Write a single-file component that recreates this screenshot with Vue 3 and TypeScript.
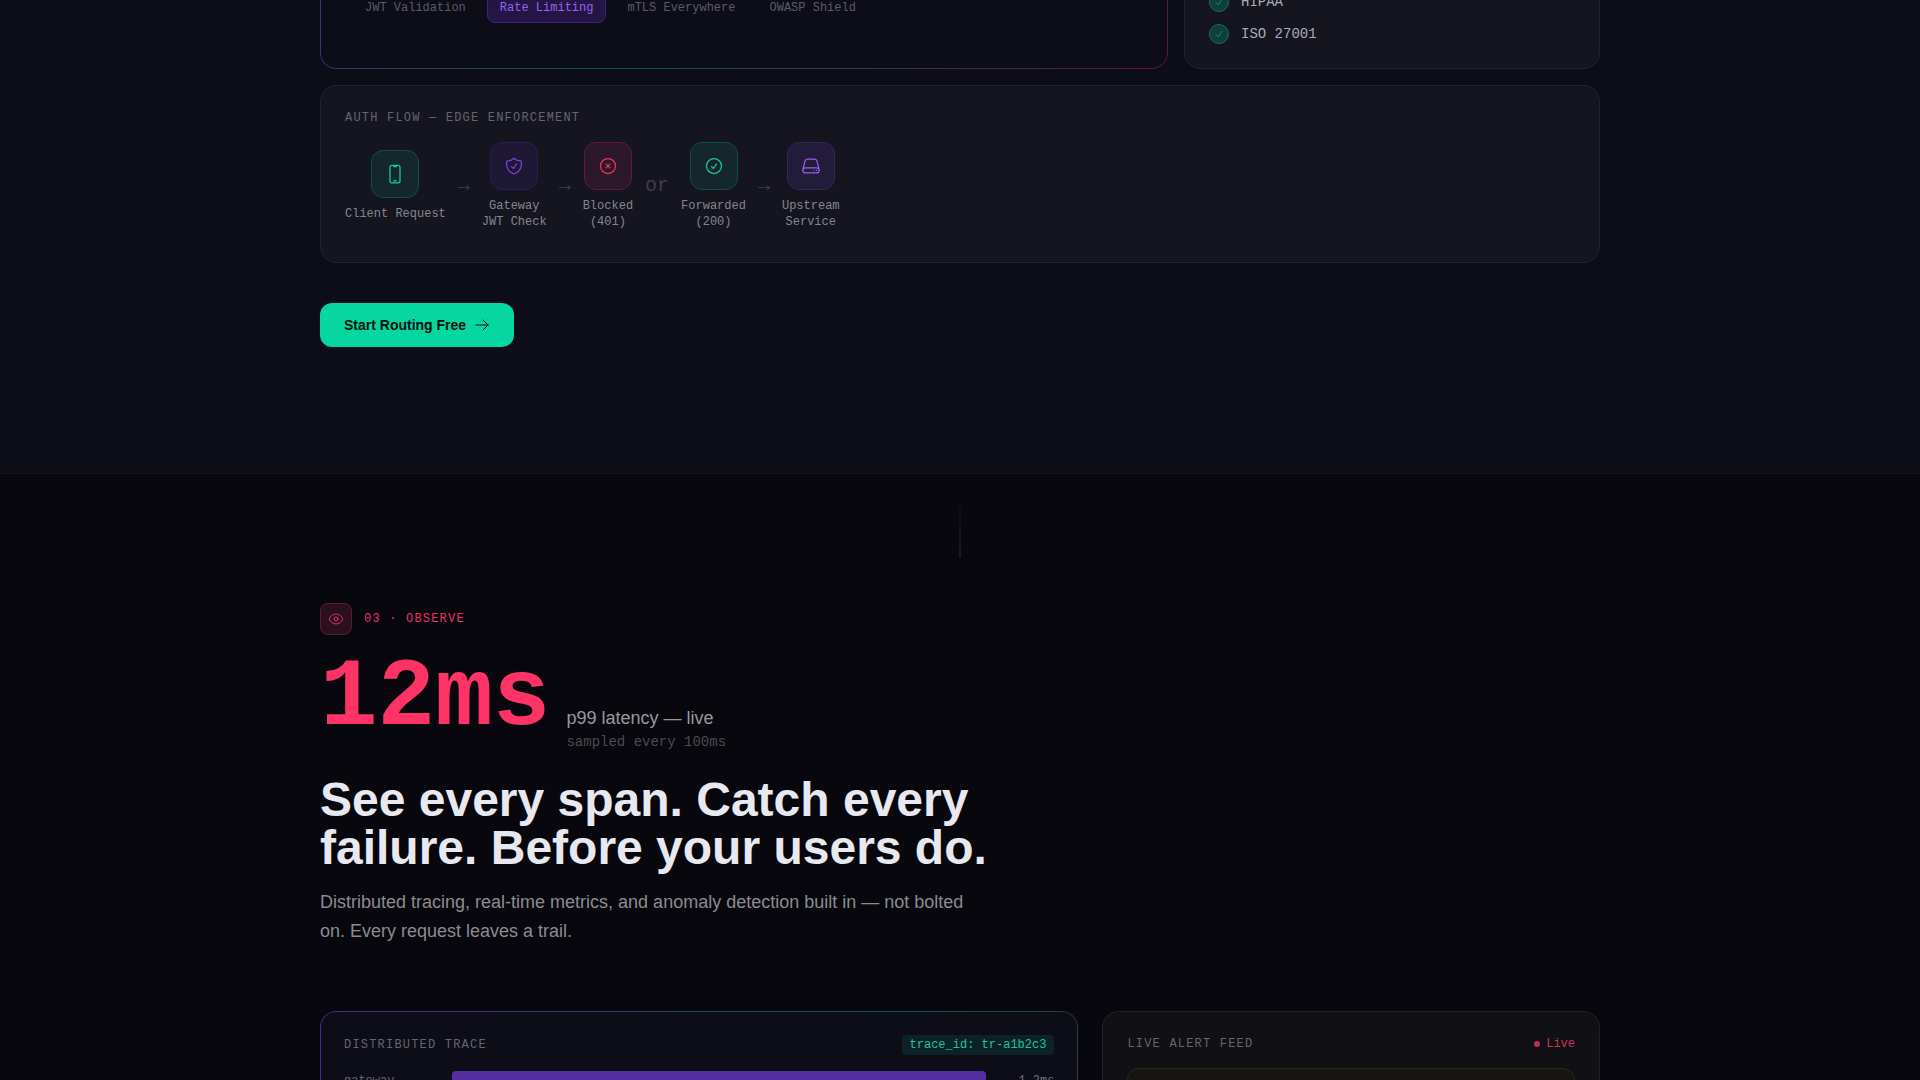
<script setup lang="ts">
import { ref } from 'vue'

type Tone = 'mint' | 'violet' | 'lilac' | 'rose'

interface FlowNode {
  kind: 'node'
  lines: string[]
  tone: Tone
  paths: string[]
}

interface FlowLink {
  kind: 'link'
  text: string
}

const tabs = ['JWT Validation', 'Rate Limiting', 'mTLS Everywhere', 'OWASP Shield']
const activeTab = ref('Rate Limiting')

const standards = ['HIPAA', 'ISO 27001']

const flow: (FlowNode | FlowLink)[] = [
  {
    kind: 'node',
    lines: ['Client Request'],
    tone: 'mint',
    paths: [
      'M10.5 1.5H8.25A2.25 2.25 0 0 0 6 3.75v16.5a2.25 2.25 0 0 0 2.25 2.25h7.5A2.25 2.25 0 0 0 18 20.25V3.75a2.25 2.25 0 0 0-2.25-2.25H13.5m-3 0V3h3V1.5m-3 0h3m-3 18.75h3',
    ],
  },
  { kind: 'link', text: '→' },
  {
    kind: 'node',
    lines: ['Gateway', 'JWT Check'],
    tone: 'violet',
    paths: [
      'M9 12.75 11.25 15 15 9.75m-3-7.036A11.959 11.959 0 0 1 3.598 6 11.99 11.99 0 0 0 3 9.749c0 5.592 3.824 10.29 9 11.623 5.176-1.332 9-6.03 9-11.622 0-1.31-.21-2.571-.598-3.751h-.152c-3.196 0-6.1-1.248-8.25-3.285Z',
    ],
  },
  { kind: 'link', text: '→' },
  {
    kind: 'node',
    lines: ['Blocked', '(401)'],
    tone: 'rose',
    paths: ['m9.75 9.75 4.5 4.5m0-4.5-4.5 4.5M21 12a9 9 0 1 1-18 0 9 9 0 0 1 18 0Z'],
  },
  { kind: 'link', text: 'or' },
  {
    kind: 'node',
    lines: ['Forwarded', '(200)'],
    tone: 'mint',
    paths: ['M9 12.75 11.25 15 15 9.75M21 12a9 9 0 1 1-18 0 9 9 0 0 1 18 0Z'],
  },
  { kind: 'link', text: '→' },
  {
    kind: 'node',
    lines: ['Upstream', 'Service'],
    tone: 'lilac',
    paths: [
      'M21.75 17.25v-.228a4.5 4.5 0 0 0-.12-1.03l-2.268-9.64a3.375 3.375 0 0 0-3.285-2.602H7.923a3.375 3.375 0 0 0-3.285 2.602l-2.268 9.64a4.5 4.5 0 0 0-.12 1.03v.228m19.5 0a3 3 0 0 1-3 3H5.25a3 3 0 0 1-3-3m19.5 0a3 3 0 0 0-3-3H5.25a3 3 0 0 0-3 3m16.5 0h.008v.008h-.008v-.008Zm-3 0h.008v.008h-.008v-.008Z',
    ],
  },
]
</script>

<template>
  <main class="page">
    <section class="secure">
      <div class="wrap">
        <div class="secure-grid">
          <div class="glow-card threats">
            <div class="tabs">
              <button
                v-for="tab in tabs"
                :key="tab"
                type="button"
                class="tab"
                :class="{ active: tab === activeTab }"
                @click="activeTab = tab"
              >{{ tab }}</button>
            </div>
          </div>

          <div class="card standards">
            <ul>
              <li v-for="name in standards" :key="name">
                <span class="tick">
                  <svg viewBox="0 0 24 24" width="10" height="10"><path d="m4.5 12.75 6 6 9-13.5" /></svg>
                </span>
                {{ name }}
              </li>
            </ul>
          </div>

          <div class="card flow-card">
            <h3 class="eyebrow">AUTH FLOW — EDGE ENFORCEMENT</h3>
            <div class="flow">
              <template v-for="(step, i) in flow" :key="i">
                <div v-if="step.kind === 'node'" class="node">
                  <span class="node-icon" :class="step.tone">
                    <svg viewBox="0 0 24 24" width="20" height="20">
                      <path v-for="d in step.paths" :key="d" :d="d" />
                    </svg>
                  </span>
                  <span class="node-label">
                    <span v-for="line in step.lines" :key="line">{{ line }}</span>
                  </span>
                </div>
                <span v-else class="link">{{ step.text }}</span>
              </template>
            </div>
          </div>
        </div>

        <button type="button" class="cta">
          Start Routing Free
          <svg viewBox="0 0 24 24" width="16" height="16"><path d="M13.5 4.5 21 12m0 0-7.5 7.5M21 12H3" /></svg>
        </button>
      </div>
    </section>

    <section class="observe">
      <div class="connector"></div>
      <div class="wrap">
        <div class="chapter">
          <span class="chapter-icon">
            <svg viewBox="0 0 24 24" width="16" height="16">
              <path d="M2.036 12.322a1.012 1.012 0 0 1 0-.639C3.423 7.51 7.36 4.5 12 4.5c4.638 0 8.573 3.007 9.963 7.178.07.207.07.431 0 .639C20.577 16.49 16.64 19.5 12 19.5c-4.638 0-8.573-3.007-9.963-7.178Z" />
              <path d="M15 12a3 3 0 1 1-6 0 3 3 0 0 1 6 0Z" />
            </svg>
          </span>
          <span class="chapter-name">03 · OBSERVE</span>
        </div>

        <div class="metric">
          <span class="metric-value">12ms</span>
          <div class="metric-note">
            <p class="metric-label">p99 latency — live</p>
            <p class="metric-sub">sampled every 100ms</p>
          </div>
        </div>

        <h2>See every span. Catch every failure. Before your users do.</h2>
        <p class="lead">
          Distributed tracing, real-time metrics, and anomaly detection built in — not bolted on. Every request
          leaves a trail.
        </p>

        <div class="observe-grid">
          <div class="glow-card trace">
            <div class="panel-head">
              <h3 class="eyebrow">DISTRIBUTED TRACE</h3>
              <code class="trace-id">trace_id: tr-a1b2c3</code>
            </div>
            <div class="span-row">
              <span class="span-name">gateway</span>
              <span class="span-bar"></span>
              <span class="span-time">1.2ms</span>
            </div>
          </div>

          <div class="card feed">
            <div class="panel-head">
              <h3 class="eyebrow">LIVE ALERT FEED</h3>
              <span class="live"><i class="dot"></i>Live</span>
            </div>
            <div class="alert"></div>
          </div>
        </div>
      </div>
    </section>
  </main>
</template>

<style>
body {
  background: #07070d;
  overflow: hidden;
}
</style>

<style scoped>
.page {
  --mono: "Liberation Mono", monospace;
  height: 100vh;
  overflow: hidden;
  color: #e8e8f0;
  background: #07070d;
  font-family: "Liberation Sans", Arial, sans-serif;
}

.page * {
  box-sizing: border-box;
}

h2,
h3,
p,
ul {
  margin: 0;
  padding: 0;
}

svg {
  display: block;
  flex: none;
  fill: none;
  stroke: currentColor;
  stroke-width: 1.5;
  stroke-linecap: round;
  stroke-linejoin: round;
}

.wrap {
  max-width: 1280px;
  margin: 0 auto;
}

.secure {
  padding-bottom: 126px;
  border-bottom: 1px solid #14141e;
  background: #0d0d18;
}

.secure-grid {
  display: grid;
  grid-template-columns: repeat(3, 1fr);
  gap: 16px;
}

.card {
  border: 1px solid #23232e;
  border-radius: 16px;
  background: #15151f;
}

.glow-card {
  position: relative;
  border-radius: 16px;
  background: #0d0d17;
}

/* Gradient hairline drawn round the card's edge */
.glow-card::before {
  content: "";
  position: absolute;
  inset: 0;
  padding: 1px;
  border-radius: inherit;
  background: linear-gradient(135deg, rgba(124, 58, 237, 0.6), rgba(6, 214, 160, 0.35) 50%, rgba(255, 51, 102, 0.35));
  mask: linear-gradient(#000 0 0) content-box exclude, linear-gradient(#000 0 0);
  pointer-events: none;
}

.threats {
  grid-column: span 2;
  margin-top: -160px;
  padding: 153px 32px 46px;
}

.tabs {
  display: flex;
  gap: 8px;
}

.tab {
  padding: 6px 12px;
  border: 1px solid transparent;
  border-radius: 8px;
  background: none;
  color: #5b5b66;
  font: 12px/16px var(--mono);
}

.tab.active {
  border-color: #40237f;
  background: #231645;
  color: #9a60ee;
}

.standards {
  display: flex;
  flex-direction: column;
  justify-content: flex-end;
  margin-top: -160px;
  padding: 24px;
}

.standards ul {
  display: flex;
  flex-direction: column;
  gap: 12px;
  list-style: none;
}

.standards li {
  display: flex;
  align-items: center;
  gap: 12px;
  color: #aaaab2;
  font: 14px/20px var(--mono);
}

.tick {
  display: grid;
  place-items: center;
  width: 20px;
  height: 20px;
  border: 1px solid #11705d;
  border-radius: 50%;
  background: #113d3a;
  color: #0bbd90;
}

.flow-card {
  grid-column: 1 / -1;
  padding: 24px 24px 32px;
}

.eyebrow {
  color: #65656f;
  font: 12px/16px var(--mono);
  letter-spacing: 1.2px;
}

.flow {
  display: flex;
  align-items: center;
  gap: 12px;
  margin-top: 16px;
}

.node {
  display: flex;
  flex-direction: column;
  align-items: center;
  gap: 8px;
}

.node-icon {
  display: grid;
  place-items: center;
  width: 48px;
  height: 48px;
  border: 1px solid;
  border-radius: 12px;
}

.mint {
  border-color: #134b45;
  background: #14282c;
}

.mint svg {
  color: #1fc79b;
}

.violet {
  border-color: #2a1d50;
  background: #1f1834;
}

.violet svg {
  color: #7540dc;
}

.lilac {
  border-color: #33275a;
  background: #221b39;
}

.lilac svg {
  color: #9560e8;
}

.rose {
  border-color: #5c1c39;
  background: #2d1829;
}

.rose svg {
  color: #ef3263;
}

.node-label {
  display: flex;
  flex-direction: column;
  align-items: center;
  color: #85858e;
  font: 12px/16px var(--mono);
}

.link {
  color: #3e3e48;
  font: 20px/28px var(--mono);
}

.cta {
  display: flex;
  align-items: center;
  gap: 8px;
  height: 44px;
  margin-top: 40px;
  padding: 0 24px;
  border: 0;
  border-radius: 12px;
  background: #06d6a0;
  color: #07110f;
  font: bold 14px/20px "Liberation Sans", Arial, sans-serif;
}

.observe {
  padding-top: 20px;
}

.connector {
  width: 2px;
  height: 64px;
  margin: 0 auto;
  background: linear-gradient(to bottom, transparent, #1d1738);
}

.chapter {
  display: flex;
  align-items: center;
  gap: 12px;
  margin-top: 45px;
}

.chapter-icon {
  display: grid;
  place-items: center;
  width: 32px;
  height: 32px;
  border: 1px solid #5e1a33;
  border-radius: 8px;
  background: #2c0f1d;
  color: #dd305c;
}

.chapter-name {
  color: #ee3263;
  font: 12px/16px var(--mono);
  letter-spacing: 1.2px;
}

.metric {
  display: flex;
  align-items: baseline;
  gap: 16px;
  margin-top: 16px;
}

.metric-value {
  color: #ff3366;
  font: bold 96px/96px var(--mono);
}

.metric-label {
  color: #98989c;
  font-size: 18px;
  line-height: 28px;
}

.metric-sub {
  color: #4b4b50;
  font: 14px/20px var(--mono);
}

h2 {
  max-width: 768px;
  margin-top: 24px;
  font-size: 48px;
  line-height: 48px;
}

.lead {
  max-width: 672px;
  margin-top: 16px;
  color: #8b8b90;
  font-size: 18px;
  line-height: 29px;
}

.observe-grid {
  display: grid;
  grid-template-columns: repeat(5, 1fr);
  gap: 24px;
  margin-top: 65px;
}

.trace {
  grid-column: span 3;
  min-height: 400px;
  padding: 24px;
}

.feed {
  grid-column: span 2;
  padding: 24px;
  border-color: #202024;
  background: #101015;
}

.panel-head {
  display: flex;
  align-items: center;
  justify-content: space-between;
  margin-bottom: 16px;
}

.trace-id {
  padding: 2px 8px;
  border-radius: 4px;
  background: #0c2226;
  color: #1dc896;
  font: 12px/16px var(--mono);
}

.span-row {
  display: flex;
  align-items: center;
  gap: 12px;
}

.span-name {
  width: 96px;
  color: #65656f;
  font: 12px/16px var(--mono);
}

.span-bar {
  flex: 1;
  height: 20px;
  border-radius: 4px;
  background: #552ea0;
}

.span-time {
  width: 56px;
  color: #73737c;
  font: 12px/16px var(--mono);
  text-align: right;
}

.live {
  display: flex;
  align-items: center;
  gap: 6px;
  color: #d63259;
  font: 12px/16px var(--mono);
}

.dot {
  width: 6px;
  height: 6px;
  border-radius: 50%;
  background: #c32c55;
}

.alert {
  height: 64px;
  border: 1px solid #2b2819;
  border-radius: 12px;
  background: #171514;
}
</style>
